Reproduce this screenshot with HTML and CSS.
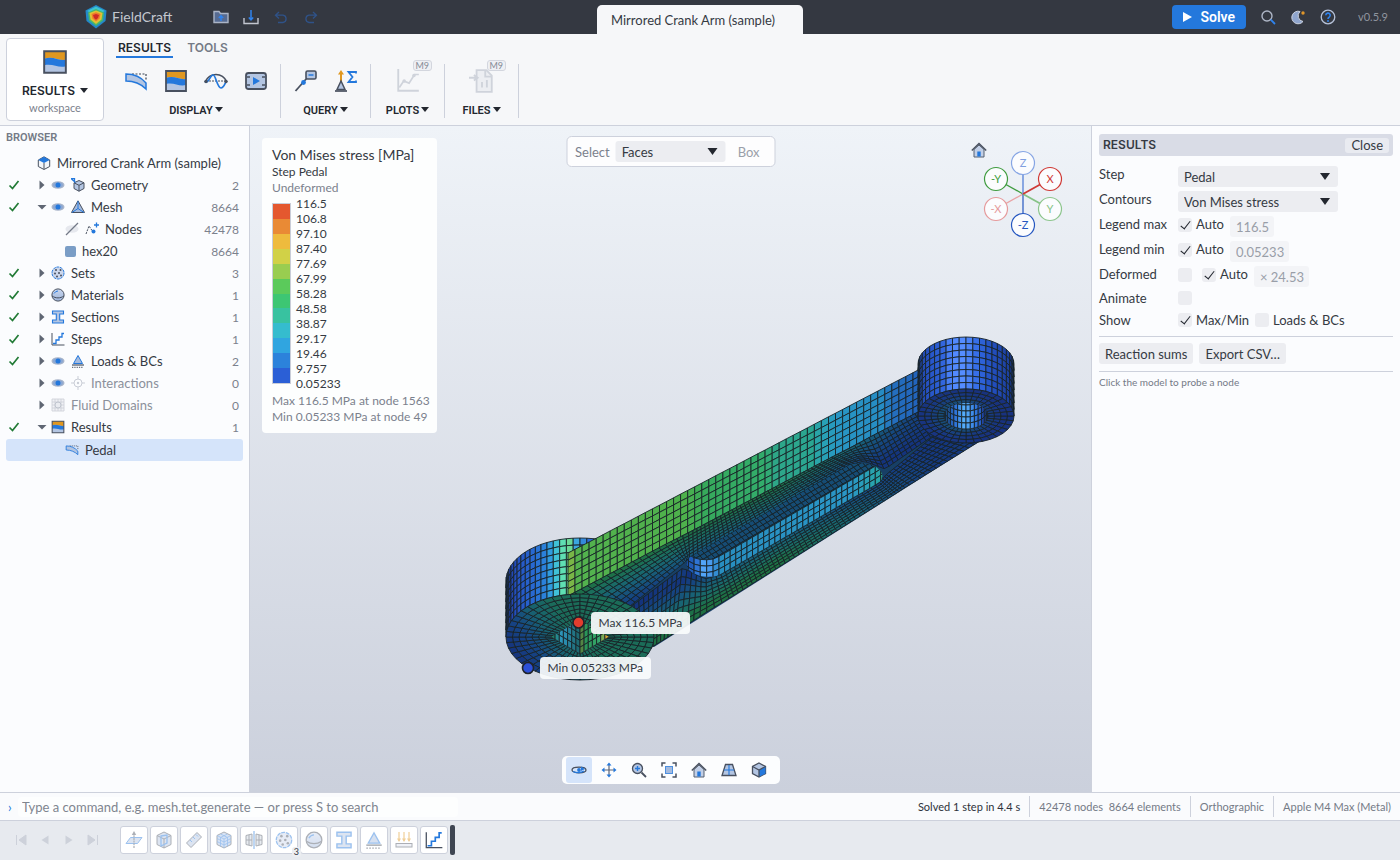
FILE: index.html
```html
<!DOCTYPE html>
<html lang="en">
<head>
<meta charset="utf-8">
<title>FieldCraft</title>
<link rel="stylesheet" href="styles.css">
</head>
<body>
<svg class="defs" aria-hidden="true">
  <defs>
    <linearGradient id="ball" x1="0" y1="0" x2="0" y2="1"><stop offset="0" stop-color="#c9d6ee"/><stop offset="1" stop-color="#9fb6dc"/></linearGradient>
  </defs>
  <symbol id="logo" viewBox="0 0 22 24"><path d="M11 0 21.500 5.500 20.500 16 11 23.500 1.500 16 .5 5.500Z" fill="#2389c9"/><path d="M11 1.500 20 6 11 10 2 6Z" fill="#3cc4d0"/><path d="M3 7.500 11 4l8 3.500-1 8L11 21l-7-5.500Z" fill="#49b86a"/><path d="M4.500 8 11 5.500 17.500 8l-1 6.500L11 19l-5.500-4.500Z" fill="#e2c033"/><path d="M6.500 9 11 7.300 15.500 9l-1 4.500L11 16.500l-3.500-3Z" fill="#ee7a2b"/><path d="M8 10l3-1 3 1-1 3-2 1.700-2-1.700Z" fill="#cf2a25"/></symbol>
  <symbol id="folder" viewBox="0 0 16 16"><path d="M1 2.500h5l1.500 2H15v9H1Z" fill="#566b92" stroke="#aab4c6" stroke-width="1.400"/><path d="M8 12V7M5.800 9 8 6.800 10.200 9" fill="none" stroke="#2f83ee" stroke-width="1.500"/></symbol>
  <symbol id="save" viewBox="0 0 16 16"><path d="M1 9v5.500h14V9" fill="none" stroke="#c2c6d0" stroke-width="1.400"/><path d="M8 1v9.500M5.800 8.500 8 10.800l2.200-2.300" fill="none" stroke="#2f83ee" stroke-width="1.500"/></symbol>
  <symbol id="undo" viewBox="0 0 16 16"><path d="M6 3 2.500 6.200 6 9.500M2.500 6.200H10a3.700 3.700 0 0 1 0 7.300H5" fill="none" stroke="#2f5288" stroke-width="1.300"/></symbol>
  <symbol id="redo" viewBox="0 0 16 16"><path d="M10 3l3.500 3.200L10 9.500M13.500 6.200H6a3.700 3.700 0 0 0 0 7.300h5" fill="none" stroke="#2f5288" stroke-width="1.300"/></symbol>
  <symbol id="search" viewBox="0 0 16 16"><circle cx="7" cy="7" r="5" fill="none" stroke="#aeb6c6" stroke-width="1.400"/><path d="M10.700 10.700 15 15" stroke="#2f83ee" stroke-width="1.800"/></symbol>
  <symbol id="moon" viewBox="0 0 16 16"><path d="M10 2.500A6.300 6.300 0 1 0 13 12.500 5.800 5.800 0 0 1 10 2.500Z" fill="#8fa5cd" stroke="#cdd3e0"/><circle cx="13" cy="4" r="1.700" fill="#e0962a"/></symbol>
  <symbol id="help" viewBox="0 0 16 16"><circle cx="8" cy="8" r="6.800" fill="none" stroke="#b5c1d8" stroke-width="1.300"/><path d="M5.800 6.300a2.200 2.200 0 1 1 3.300 1.900Q8 8.800 8 10" fill="none" stroke="#2f83ee" stroke-width="1.600"/><circle cx="8" cy="12" r="1" fill="#2f83ee"/></symbol>
  <symbol id="contour" viewBox="0 0 24 24"><path d="M2 2h20v20H2Z" fill="#b3c5e2"/><path d="M2 2h20v8c-7 1-12-4-20-1Z" fill="#e0971f"/><path d="M2 9c8-3 13 2 20 1v6c-7 2-12-3-20-1Z" fill="#2478dc"/><path d="M2 2h20v20H2Z" fill="none" stroke="#48505f" stroke-width="1.800"/></symbol>
  <symbol id="deform" viewBox="0 0 24 24"><path d="M8 5h14v6" fill="none" stroke="#3b4454" stroke-width="1.200" stroke-dasharray="2 1.500"/><path d="M2 5c8 0 15 3 20 9v6c-5-5-12-8-20-8Z" fill="#b3c5e2" stroke="#2478dc" stroke-width="1.500"/></symbol>
  <symbol id="wave" viewBox="0 0 24 24"><path d="M2 12h20" stroke="#48505f" stroke-dasharray="2 1"/><path d="M1 13C6 3 18 3 23 13" fill="none" stroke="#48505f" stroke-width="1.600"/><path d="M1 13c4 2 5-7 8-7s4 13 8 13c3 0 4-5 5-6" fill="none" stroke="#2478dc" stroke-width="1.700"/><circle cx="2" cy="12.500" r="1.700" fill="#48505f"/><circle cx="22" cy="12.500" r="1.700" fill="#48505f"/></symbol>
  <symbol id="film" viewBox="0 0 24 24"><rect x="2" y="4" width="20" height="16" rx="2.500" fill="#b3c5e2" stroke="#48505f" stroke-width="1.800"/><path d="M3 8h3M3 16h3M18 8h3M18 16h3" stroke="#48505f" stroke-width="1.500"/><path d="M9 8v8l7-4Z" fill="#2478dc"/></symbol>
  <symbol id="probe" viewBox="0 0 24 24"><path d="M1.500 22 13 9" stroke="#48505f" stroke-width="1.800"/><rect x="12" y="2" width="10" height="8" rx="1.500" fill="#b3c5e2" stroke="#48505f" stroke-width="1.600"/><path d="M14.500 6h5" stroke="#2478dc" stroke-width="1.500"/><circle cx="9.500" cy="13.500" r="2.400" fill="#2478dc"/></symbol>
  <symbol id="reaction" viewBox="0 0 24 24"><path d="M7 13V4" stroke="#e0971f" stroke-width="2"/><path d="M4 5.500 7 1l3 4.500Z" fill="#e0971f"/><path d="M3 20.500 7 12l4 8.500Z" fill="#b3c5e2" stroke="#48505f" stroke-width="1.500"/><path d="M1 22h12" stroke="#48505f" stroke-width="1.700"/><path d="M22 4.500V3h-7.500l4 5-4 5H22v-1.500" fill="none" stroke="#2478dc" stroke-width="1.800"/></symbol>
  <symbol id="plot" viewBox="0 0 24 24"><path d="M3 1v20h19" fill="none" stroke="#cfd3db" stroke-width="1.700"/><path d="m4 18 4-6 5 2 5-8h4" fill="none" stroke="#cfd3db" stroke-width="1.600"/><circle cx="8.500" cy="12" r="1.600" fill="#cfd3db"/><circle cx="17.500" cy="7" r="1.600" fill="#cfd3db"/></symbol>
  <symbol id="file" viewBox="0 0 24 24"><path d="M7 2h9l5 5v15H7Z" fill="#eceef2" stroke="#cfd3db" stroke-width="1.700"/><path d="M15 2v6h6M12 18v-5M16.500 18v-7" fill="none" stroke="#cfd3db" stroke-width="1.700"/><path d="M0 9h7M4.500 6.500 8 9l-3.500 2.500" fill="none" stroke="#cfd3db" stroke-width="1.700"/></symbol>
  <symbol id="check" viewBox="0 0 12 12"><path d="M1.500 6.500 4.500 9.500 10.500 2" fill="none" stroke="#217a35" stroke-width="1.700"/></symbol>
  <symbol id="right" viewBox="0 0 12 12"><path d="M3.500 1.500 8.500 6l-5 4.500Z" fill="#5f6673"/></symbol>
  <symbol id="down" viewBox="0 0 12 12"><path d="M1.500 4h9L6 8.500Z" fill="#5f6673"/></symbol>
  <symbol id="eye" viewBox="0 0 14 14"><ellipse cx="7" cy="7" rx="6.500" ry="3.800" fill="#a9b5ca"/><ellipse cx="7" cy="7" rx="5" ry="2.800" fill="#8ba8d4"/><circle cx="7" cy="7" r="2.500" fill="#2478dc"/></symbol>
  <symbol id="eyeoff" viewBox="0 0 14 14"><ellipse cx="7" cy="7" rx="6.500" ry="3.800" fill="#e6e8ee"/><path d="M1 13 13 1" stroke="#737987" stroke-width="1.200"/></symbol>
  <symbol id="cube" viewBox="0 0 14 14"><path d="M7 .8 12.700 4v6.500L7 13.500 1.300 10.500V4Z" fill="#f2f5fa" stroke="#48505f"/><path d="M7 .8 12.700 4 7 7 1.300 4Z" fill="#2478dc"/><path d="M7 7v6" stroke="#48505f"/></symbol>
  <symbol id="geom" viewBox="0 0 14 14"><path d="M8 2.500l5 2.300v5.700l-5 2.700-5-2.700V4.800Z" fill="#b3c5e2" stroke="#48505f"/><path d="m3 4.800 5 2.500 5-2.500M8 7.300v6" fill="none" stroke="#48505f"/><path d="M0 .5h3.500v3.200M.5 1l4 3.500" fill="none" stroke="#2478dc" stroke-width="1.300"/></symbol>
  <symbol id="mesh" viewBox="0 0 14 14"><path d="M7 .8 13.500 12.500H.5Z" fill="#a5bbde" stroke="#48505f"/><path d="M7 1v7.500M7 8.500l-6 4M7 8.500l6 4" stroke="#2478dc"/></symbol>
  <symbol id="nodes" viewBox="0 0 14 14"><path d="m1 12 3-8 4 6" fill="none" stroke="#48505f" stroke-dasharray="2 1"/><circle cx="8.500" cy="9.500" r="2" fill="#2478dc"/><path d="M11.500.5v5M9 3h5" stroke="#2478dc" stroke-width="1.300"/></symbol>
  <symbol id="sets" viewBox="0 0 14 14"><circle cx="7" cy="7" r="6" fill="#ccd7ec" stroke="#2478dc" stroke-dasharray="3 .7"/><g fill="#48505f"><circle cx="5" cy="4" r="1"/><circle cx="9.500" cy="4" r="1"/><circle cx="4" cy="7.500" r="1"/><circle cx="8" cy="7" r="1"/><circle cx="6" cy="10.500" r="1"/><circle cx="10" cy="9.500" r="1"/></g></symbol>
  <symbol id="ballicon" viewBox="0 0 14 14"><circle cx="7" cy="7" r="6.100" fill="url(#ball)" stroke="#48505f"/><path d="M1 8c4 2.500 8 2.500 12 0" fill="none" stroke="#48505f"/><path d="M3 5.500Q4.500 3 7 3" fill="none" stroke="#2478dc"/></symbol>
  <symbol id="ibeam" viewBox="0 0 14 14"><path d="M1.500 1h11v3H8.700v6h3.800v3h-11v-3h3.800V4H1.500Z" fill="#b3c5e2" stroke="#2478dc" stroke-width="1.100"/></symbol>
  <symbol id="steps" viewBox="0 0 14 14"><path d="M1 1v12h12.500" fill="none" stroke="#48505f"/><path d="M2 11.500h3V8h3V5h3V1.500h2" fill="none" stroke="#2478dc" stroke-width="1.300"/></symbol>
  <symbol id="loads" viewBox="0 0 14 14"><path d="M7 1.500 11.500 9.500h-9Z" fill="#a5bbde" stroke="#2478dc"/><path d="M1 11h12" stroke="#48505f" stroke-width="1.200"/><path d="M1 13.300h11" stroke="#48505f" stroke-dasharray="1.300 1"/></symbol>
  <symbol id="target" viewBox="0 0 14 14"><circle cx="7" cy="7" r="4" fill="none" stroke="#c9cdd6"/><circle cx="7" cy="7" r="1.200" fill="#c9cdd6"/><path d="M7 0v3M7 11v3M0 7h3M11 7h3" stroke="#c9cdd6"/></symbol>
  <symbol id="fluid" viewBox="0 0 14 14"><path d="M1 1h12v12H1ZM4 1v12M10 1v12M1 4h12M1 10h12M7 1v12M1 7h12" fill="#f0f1f5" stroke="#cfd2da" stroke-width=".9"/><circle cx="7" cy="7" r="3" fill="#e9ebf0" stroke="#bfc4ce"/></symbol>
  <symbol id="home" viewBox="0 0 16 16"><path d="M3 7.500V15h10V7.500L8 3Z" fill="#c2cfe6" stroke="#566070"/><path d="M.8 8.500 8 1.500l7.200 7" fill="none" stroke="#48505f" stroke-width="1.500"/><path d="M6.300 9.500h3.400v5H6.300Z" fill="#2478dc"/></symbol>
  <symbol id="orbit" viewBox="0 0 16 16"><ellipse cx="8" cy="8" rx="7" ry="2.800" fill="none" stroke="#48505f" stroke-width="1.300"/><path d="M2 9.500c3 1.500 8 1.600 11-.5" fill="none" stroke="#2478dc" stroke-width="1.300"/><circle cx="8" cy="8" r="1.900" fill="#2478dc"/><path d="M10 4.500l4 2.500-4 2Z" fill="#2478dc"/></symbol>
  <symbol id="pan" viewBox="0 0 16 16"><path d="M8 3v10M3 8h10" stroke="#5d6678" stroke-width="1.200"/><path d="M8 .5l2.500 3h-5ZM8 15.500l2.500-3h-5ZM.5 8l3-2.500v5ZM15.500 8l-3-2.500v5Z" fill="#2478dc"/></symbol>
  <symbol id="zoom" viewBox="0 0 16 16"><circle cx="6.500" cy="6.500" r="5" fill="#b3c5e2" stroke="#48505f" stroke-width="1.300"/><path d="M10.500 10.500 15 15" stroke="#48505f" stroke-width="1.800"/><path d="M6.500 4v5M4 6.500h5" stroke="#2478dc" stroke-width="1.400"/></symbol>
  <symbol id="fit" viewBox="0 0 16 16"><path d="M1 4.500V1h3.500M11.500 1H15v3.500M15 11.500V15h-3.500M4.500 15H1v-3.500" fill="none" stroke="#48505f" stroke-width="1.500"/><rect x="4.500" y="4.500" width="7" height="7" fill="#a5bbde" stroke="#4b8fe0"/></symbol>
  <symbol id="persp" viewBox="0 0 16 16"><path d="M4.500 2.500h7L15 13.500H1Z" fill="#b3c5e2" stroke="#48505f" stroke-width="1.300"/><path d="M8 3v10M3 8h10" stroke="#2478dc" stroke-width="1.100"/></symbol>
  <symbol id="box" viewBox="0 0 16 16"><path d="M8 1l6.500 3.500v7L8 15l-6.500-3.500v-7Z" fill="#b3c5e2" stroke="#48505f" stroke-width="1.300"/><path d="M8 8l6.500-3.500v7L8 15Z" fill="#2478dc"/><path d="M1.500 4.500 8 8l6.500-3.500M8 8v7" fill="none" stroke="#48505f" stroke-width="1.300"/></symbol>
  <symbol id="plane" viewBox="0 0 18 18"><path d="M5.500 6.500H17l-4.500 6H1Z" fill="#b3c5e2" stroke="#2478dc"/><path d="M9 17V3" stroke="#48505f" stroke-width="1.200" stroke-dasharray="2 .7"/><path d="M9 0l2.200 4H6.800Z" fill="#48505f"/></symbol>
  <symbol id="solid" viewBox="0 0 18 18"><path d="M9 1l7 3.500v9L9 17l-7-3.500v-9Z" fill="#b3c5e2" stroke="#48505f"/><path d="m2 4.500 7 3.500 7-3.500M9 8v9" fill="none" stroke="#48505f"/><path d="M6 5 12 4v8l-6 3Z" fill="none" stroke="#2478dc" stroke-width="1.300"/></symbol>
  <symbol id="ruler" viewBox="0 0 18 18"><path d="M1.500 12 12 1.500l4.500 4.500L6 16.500Z" fill="#b3c5e2" stroke="#48505f"/><path d="m5 9 2 2M8 6l2 2M11 3.500l2 2" stroke="#2478dc"/></symbol>
  <symbol id="grid3" viewBox="0 0 18 18"><path d="M9 1l7 3.500v9L9 17l-7-3.500v-9Z" fill="#a5bfe8" stroke="#48505f"/><path d="m2 4.500 7 3.500 7-3.500M9 8v9M2 7.500l7 3.500 7-3.500M2 10.500 9 14l7-3.500M5.500 3l7 3.500v9M12.500 3l-7 3.500v9" fill="none" stroke="#2478dc" stroke-width=".8"/></symbol>
  <symbol id="mirror" viewBox="0 0 18 18"><path d="M1 4.500 7 3v12l-6-1.500ZM17 4.500 11 3v12l6-1.500ZM4 4v10M1 9h6M14 4v10M11 9h6" fill="#ccd3e0" stroke="#48505f"/><path d="M9 0v18" stroke="#2478dc" stroke-width="1.300"/></symbol>
  <symbol id="force" viewBox="0 0 18 18"><path d="M4 1v9M9 1v9M14 1v9" stroke="#e0971f" stroke-width="1.200"/><path d="M2 7.500h4L4 11ZM7 7.500h4L9 11ZM12 7.500h4L14 11Z" fill="#e0971f"/><rect x="1" y="12.500" width="16" height="3.500" fill="#dce2ee" stroke="#48505f"/></symbol>
</svg>

<div class="app">
  <header class="topbar">
    <div class="brand">
      <svg class="logo"><use href="#logo"/></svg><span class="brand-name">FieldCraft</span>
      <nav class="quick" aria-label="File">
        <button class="ghost" aria-label="Open"><svg class="i16"><use href="#folder"/></svg></button>
        <button class="ghost" aria-label="Save"><svg class="i16"><use href="#save"/></svg></button>
        <button class="ghost" aria-label="Undo"><svg class="i16"><use href="#undo"/></svg></button>
        <button class="ghost" aria-label="Redo"><svg class="i16"><use href="#redo"/></svg></button>
      </nav>
    </div>
    <button class="doc-tab">Mirrored Crank Arm (sample)</button>
    <div class="top-right">
      <button class="solve"><span class="play"></span>Solve</button>
      <button class="ghost" aria-label="Search"><svg class="i16"><use href="#search"/></svg></button>
      <button class="ghost" aria-label="Theme"><svg class="i16"><use href="#moon"/></svg></button>
      <button class="ghost" aria-label="Help"><svg class="i16"><use href="#help"/></svg></button>
      <span class="version">v0.5.9</span>
    </div>
  </header>

  <section class="ribbon">
    <button class="workspace"><svg class="i26"><use href="#contour"/></svg><span class="ws-name">RESULTS <i class="tri"></i></span><span class="ws-sub">workspace</span></button>
    <div class="ribbon-body">
      <div class="tabs"><button class="tab tab-on">RESULTS</button><button class="tab">TOOLS</button></div>
      <div class="groups">
        <div class="group group-4"><div class="tools">
          <button class="ghost" aria-label="Deformed shape"><svg class="i24"><use href="#deform"/></svg></button>
          <button class="ghost" aria-label="Contours"><svg class="i24"><use href="#contour"/></svg></button>
          <button class="ghost" aria-label="Modes"><svg class="i24"><use href="#wave"/></svg></button>
          <button class="ghost" aria-label="Animate"><svg class="i24"><use href="#film"/></svg></button></div>
          <button class="group-name">DISPLAY<i class="tri"></i></button></div>
        <div class="group group-2"><div class="tools">
          <button class="ghost" aria-label="Probe"><svg class="i24"><use href="#probe"/></svg></button>
          <button class="ghost" aria-label="Reactions"><svg class="i24"><use href="#reaction"/></svg></button></div>
          <button class="group-name">QUERY<i class="tri"></i></button></div>
        <div class="group group-1"><div class="tools">
          <button class="ghost badged" aria-label="Plot"><svg class="i26"><use href="#plot"/></svg><span class="badge">M9</span></button></div>
          <button class="group-name">PLOTS<i class="tri"></i></button></div>
        <div class="group group-1"><div class="tools">
          <button class="ghost badged" aria-label="Export report"><svg class="i26"><use href="#file"/></svg><span class="badge">M9</span></button></div>
          <button class="group-name">FILES<i class="tri"></i></button></div>
      </div>
    </div>
  </section>

  <main class="main">
    <aside class="browser">
      <h2 class="browser-title">BROWSER</h2>
      <ul class="tree">
        <li class="row"><span class="lead lead-root"></span><svg class="i14"><use href="#cube"/></svg><span class="name">Mirrored Crank Arm (sample)</span></li>
        <li class="row"><span class="lead"><svg class="i12"><use href="#check"/></svg><svg class="i12"><use href="#right"/></svg></span><svg class="i14"><use href="#eye"/></svg><svg class="i14"><use href="#geom"/></svg><span class="name">Geometry</span><span class="count">2</span></li>
        <li class="row"><span class="lead"><svg class="i12"><use href="#check"/></svg><svg class="i12"><use href="#down"/></svg></span><svg class="i14"><use href="#eye"/></svg><svg class="i14"><use href="#mesh"/></svg><span class="name">Mesh</span><span class="count">8664</span></li>
        <li class="row"><span class="lead lead-child"></span><svg class="i14"><use href="#eyeoff"/></svg><svg class="i14"><use href="#nodes"/></svg><span class="name">Nodes</span><span class="count">42478</span></li>
        <li class="row"><span class="lead lead-child"></span><span class="swatch"></span><span class="name">hex20</span><span class="count">8664</span></li>
        <li class="row"><span class="lead"><svg class="i12"><use href="#check"/></svg><svg class="i12"><use href="#right"/></svg></span><svg class="i14"><use href="#sets"/></svg><span class="name">Sets</span><span class="count">3</span></li>
        <li class="row"><span class="lead"><svg class="i12"><use href="#check"/></svg><svg class="i12"><use href="#right"/></svg></span><svg class="i14"><use href="#ballicon"/></svg><span class="name">Materials</span><span class="count">1</span></li>
        <li class="row"><span class="lead"><svg class="i12"><use href="#check"/></svg><svg class="i12"><use href="#right"/></svg></span><svg class="i14"><use href="#ibeam"/></svg><span class="name">Sections</span><span class="count">1</span></li>
        <li class="row"><span class="lead"><svg class="i12"><use href="#check"/></svg><svg class="i12"><use href="#right"/></svg></span><svg class="i14"><use href="#steps"/></svg><span class="name">Steps</span><span class="count">1</span></li>
        <li class="row"><span class="lead"><svg class="i12"><use href="#check"/></svg><svg class="i12"><use href="#right"/></svg></span><svg class="i14"><use href="#eye"/></svg><svg class="i14"><use href="#loads"/></svg><span class="name">Loads &amp; BCs</span><span class="count">2</span></li>
        <li class="row row-dim"><span class="lead"><svg class="i12"><use href="#right"/></svg></span><svg class="i14"><use href="#eye"/></svg><svg class="i14"><use href="#target"/></svg><span class="name">Interactions</span><span class="count">0</span></li>
        <li class="row row-dim"><span class="lead"><svg class="i12"><use href="#right"/></svg></span><svg class="i14"><use href="#fluid"/></svg><span class="name">Fluid Domains</span><span class="count">0</span></li>
        <li class="row"><span class="lead"><svg class="i12"><use href="#check"/></svg><svg class="i12"><use href="#down"/></svg></span><svg class="i14"><use href="#contour"/></svg><span class="name">Results</span><span class="count">1</span></li>
        <li class="row row-on"><span class="lead lead-child"></span><svg class="i14"><use href="#deform"/></svg><span class="name">Pedal</span></li>
      </ul>
    </aside>

    <section class="viewport" aria-label="Model view">
      <svg class="model" id="model" viewBox="250 126 841 666"></svg>
      <div class="legend">
        <h3 class="legend-title">Von Mises stress [MPa]</h3>
        <p class="legend-line">Step Pedal</p>
        <p class="legend-line muted">Undeformed</p>
        <div class="scale">
          <div class="bar"><i class="c1"></i><i class="c2"></i><i class="c3"></i><i class="c4"></i><i class="c5"></i><i class="c6"></i><i class="c7"></i><i class="c8"></i><i class="c9"></i><i class="c10"></i><i class="c11"></i><i class="c12"></i></div>
          <ul class="ticks"><li>116.5</li><li>106.8</li><li>97.10</li><li>87.40</li><li>77.69</li><li>67.99</li><li>58.28</li><li>48.58</li><li>38.87</li><li>29.17</li><li>19.46</li><li>9.757</li><li>0.05233</li></ul>
        </div>
        <p class="legend-line muted">Max 116.5 MPa at node 1563</p>
        <p class="legend-line muted">Min 0.05233 MPa at node 49</p>
      </div>
      <div class="picker"><label class="muted" for="pick">Select</label><span class="drop drop-pick"><select id="pick"><option>Faces</option></select></span><button class="plain">Box</button></div>
      <span class="callout callout-max">Max 116.5 MPa</span>
      <span class="callout callout-min">Min 0.05233 MPa</span>
      <div class="gizmo">
        <button class="ghost gizmo-home" aria-label="Home view"><svg class="i16"><use href="#home"/></svg></button>
        <svg class="axes" viewBox="0 0 84 90">
          <path d="M42 45 15 30" stroke="#3f9c3f" stroke-width="1.300"/><path d="M42 45 15 60" stroke="#e9a3a5" stroke-width="1.300"/>
          <path d="M42 45V14" stroke="#7f9fe0" stroke-width="1.800"/><path d="M42 45v31" stroke="#2456c0" stroke-width="1.200"/>
          <path d="M42 45 69 60" stroke="#86c286" stroke-width="1.800"/><path d="M42 45 69 30" stroke="#cf3834" stroke-width="1.800"/>
          <g fill="#fbfcfe" stroke-width="1.200"><circle cx="42" cy="14" r="11.500" stroke="#86a5e4"/><circle cx="15" cy="30" r="11.500" stroke="#3f9c3f"/><circle cx="69" cy="30" r="11.500" stroke="#cf3834"/><circle cx="15" cy="60" r="11.500" stroke="#e59a9c"/><circle cx="69" cy="60" r="11.500" stroke="#8cc58c"/><circle cx="42" cy="76" r="11.500" stroke="#2456c0"/></g>
          <g class="axis-text"><text x="42" y="18" fill="#7f9fe0">Z</text><text x="15" y="34" fill="#3f9c3f">-Y</text><text x="69" y="34" fill="#cf3834">X</text><text x="15" y="64" fill="#e59a9c">-X</text><text x="69" y="64" fill="#86c286">Y</text><text x="42" y="80" fill="#2456c0">-Z</text></g>
        </svg>
      </div>
      <div class="viewbar">
        <button class="vb vb-on" aria-label="Orbit"><svg class="i16"><use href="#orbit"/></svg></button><button class="vb" aria-label="Pan"><svg class="i16"><use href="#pan"/></svg></button><button class="vb" aria-label="Zoom"><svg class="i16"><use href="#zoom"/></svg></button><button class="vb" aria-label="Fit"><svg class="i16"><use href="#fit"/></svg></button><button class="vb" aria-label="Home"><svg class="i16"><use href="#home"/></svg></button><button class="vb" aria-label="Projection"><svg class="i16"><use href="#persp"/></svg></button><button class="vb" aria-label="Shading"><svg class="i16"><use href="#box"/></svg></button>
      </div>
    </section>

    <aside class="panel">
      <header class="panel-head"><h2 class="panel-title">RESULTS</h2><button class="btn close">Close</button></header>
      <div class="form">
        <label class="key" for="step">Step</label><span class="drop"><select id="step"><option>Pedal</option></select></span>
        <label class="key" for="cont">Contours</label><span class="drop"><select id="cont"><option>Von Mises stress</option></select></span>
        <label class="key" for="lmax">Legend max</label><div class="val"><label class="tick"><input type="checkbox" checked>Auto</label><input class="num num-s" id="lmax" value="116.5" disabled></div>
        <label class="key" for="lmin">Legend min</label><div class="val"><label class="tick"><input type="checkbox" checked>Auto</label><input class="num num-l" id="lmin" value="0.05233" disabled></div>
        <label class="key" for="deformed">Deformed</label><div class="val val-wide"><input type="checkbox" id="deformed"><label class="tick"><input type="checkbox" checked>Auto</label><input class="num num-m" aria-label="Scale" value="× 24.53" disabled></div>
        <label class="key key-s" for="anim">Animate</label><div class="val val-s"><input type="checkbox" id="anim"></div>
        <span class="key key-s">Show</span><div class="val val-s"><label class="tick"><input type="checkbox" checked>Max/Min</label><label class="tick"><input type="checkbox">Loads &amp; BCs</label></div>
      </div>
      <div class="actions"><button class="btn">Reaction sums</button><button class="btn">Export CSV…</button></div>
      <p class="hint">Click the model to probe a node</p>
    </aside>
  </main>

  <div class="command">
    <label class="prompt" for="cmd">›</label><input class="cmd" id="cmd" placeholder="Type a command, e.g. mesh.tet.generate — or press S to search">
    <div class="status"><span class="stat stat-strong">Solved 1 step in 4.4 s</span><span class="stat">42478 nodes&nbsp; 8664 elements</span><span class="stat">Orthographic</span><span class="stat">Apple M4 Max (Metal)</span></div>
  </div>

  <footer class="timeline">
    <div class="transport">
      <button class="ghost" aria-label="First"><svg class="i12"><path d="M1.500 1v10M11 1v10L4 6Z" fill="#cdd1da" stroke="#cdd1da"/></svg></button>
      <button class="ghost" aria-label="Back"><svg class="i12"><path d="M9.500 1.500v9L2.500 6Z" fill="#cdd1da"/></svg></button>
      <button class="ghost" aria-label="Play"><svg class="i12"><path d="M2.500 1.500v9L9.500 6Z" fill="#cdd1da"/></svg></button>
      <button class="ghost" aria-label="Last"><svg class="i12"><path d="M10.500 1v10M1 1v10l7-5Z" fill="#cdd1da" stroke="#cdd1da"/></svg></button>
    </div>
    <div class="history">
      <button class="op" aria-label="Plane"><svg class="i18"><use href="#plane"/></svg></button><button class="op" aria-label="Part"><svg class="i18"><use href="#solid"/></svg></button><button class="op" aria-label="Size"><svg class="i18"><use href="#ruler"/></svg></button><button class="op" aria-label="Mesh"><svg class="i18"><use href="#grid3"/></svg></button><button class="op" aria-label="Mirror"><svg class="i18"><use href="#mirror"/></svg></button><button class="op badged" aria-label="Sets"><svg class="i18"><use href="#sets"/></svg><span class="op-count">3</span></button><button class="op" aria-label="Material"><svg class="i18"><use href="#ballicon"/></svg></button><button class="op" aria-label="Section"><svg class="i18"><use href="#ibeam"/></svg></button><button class="op" aria-label="Support"><svg class="i18"><use href="#loads"/></svg></button><button class="op" aria-label="Load"><svg class="i18"><use href="#force"/></svg></button><button class="op op-now" aria-label="Step"><svg class="i18"><use href="#steps"/></svg></button><span class="marker"></span>
    </div>
  </footer>
</div>
<script src="model.js"></script>
</body>
</html>
```
FILE: styles.css
```css
* { box-sizing: border-box; }
body { margin: 0; font-family: Lato, "Noto Sans", sans-serif; font-size: 13px; line-height: 16px; color: #353a43; }
h2, h3, p, ul { margin: 0; padding: 0; font-weight: 400; }
ul { list-style: none; }
button, input, select { font: inherit; color: inherit; margin: 0; border: 0; }
button { background: none; padding: 0; cursor: pointer; }
svg { display: block; flex: none; }
.defs { position: absolute; width: 0; height: 0; }
.i12 { width: 12px; height: 12px; }
.i14 { width: 14px; height: 14px; }
.i16 { width: 16px; height: 16px; }
.i18 { width: 18px; height: 18px; }
.i24 { width: 24px; height: 24px; }
.i26 { width: 26px; height: 26px; }
.muted { color: #7b818d; }
.app { display: flex; flex-direction: column; min-height: 100vh; background: #f6f7f9; }

.topbar { display: grid; grid-template-columns: 1fr auto 1fr; height: 34px; background: #343841; }
.brand { display: flex; align-items: center; padding-left: 85px; }
.logo { width: 22px; height: 24px; }
.brand-name { margin-left: 5px; width: 101px; font-size: 14px; color: #c3c7cf; }
.quick { display: flex; gap: 14px; }
.doc-tab { align-self: end; height: 29px; padding: 0 14px; min-width: 206px; text-align: left; border-radius: 5px 5px 0 0; background: #f6f7f9; }
.top-right { display: flex; align-items: center; justify-content: flex-end; gap: 14px; padding-right: 12px; }
.solve { display: flex; align-items: center; gap: 8px; height: 24px; padding: 0 11px; border-radius: 4px; background: #2478dc; color: #fff; font: 600 14px/24px Roboto, sans-serif; }
.play { border: 5px solid transparent; border-left: 9px solid #fff; border-right: 0; }
.version { margin-left: 8px; font-size: 11px; color: #8f949e; }

.ribbon { display: flex; height: 92px; gap: 12px; padding: 4px 6px; border-bottom: 1px solid #cdd1dc; }
.workspace { display: flex; flex-direction: column; align-items: center; width: 98px; height: 83px; padding-top: 10px; border: 1px solid #cdd1dc; border-radius: 4px; background: #fff; }
.ws-name { margin-top: 7px; font: 600 12px/18px Inter, sans-serif; color: #23272f; }
.ws-sub { font-size: 11px; color: #7b818d; }
.tri { display: inline-block; margin-left: 2px; border: 4px solid transparent; border-top: 5px solid #23272f; border-bottom: 0; vertical-align: 2px; }
.tabs { display: flex; gap: 12px; height: 20px; }
.tab { padding: 1px 2px 0; border-bottom: 2px solid transparent; font: 600 12px/17px Inter, sans-serif; color: #747a86; }
.tab-on { border-color: #2478dc; color: #23272f; }
.groups { display: flex; margin-top: 6px; }
.group { display: flex; flex-direction: column; justify-content: space-between; height: 54px; border-right: 1px solid #cdd1dc; }
.tools { display: flex; justify-content: center; gap: 16px; height: 34px; align-items: center; }
.group-4 { padding-right: 4px; width: 165px; }
.group-2 { width: 90px; }
.group-1 { width: 74px; }
.group-name { font: 600 11px/14px Roboto, sans-serif; color: #23272f; }
.badged { position: relative; }
.badge { position: absolute; left: 18px; top: -8px; padding: 0 2px; border: 1px solid #d3d6de; border-radius: 3px; background: #eef0f4; font-size: 9px; line-height: 9px; color: #858b96; }

.main { flex: 1; display: grid; grid-template-columns: 250px 1fr 309px; }
.browser { padding: 4px 6px; background: #fbfcfe; border-right: 1px solid #cdd1dc; }
.browser-title { font: 600 11px/16px Roboto, sans-serif; color: #747a86; margin-bottom: 6px; }
.row { display: flex; align-items: center; gap: 6px; height: 22px; padding-right: 4px; border-radius: 3px; }
.row:last-child { margin-top: 1px; }
.lead { display: flex; justify-content: space-between; width: 42px; margin-right: -3px; padding-left: 2px; }
.row-dim .lead { justify-content: flex-end; }
.lead-root { width: 28px; }
.lead-child { width: 56px; }
.row-on { background: #d5e4fa; }
.row-dim .name { color: #8b909b; }
.count { margin-left: auto; padding-top: 1px; font-size: 12px; color: #7b818d; }
.swatch { width: 11px; height: 11px; border-radius: 2px; background: #7a9dc6; }

.viewport { position: relative; overflow: hidden; background: linear-gradient(#eff3f8, #cbd0dc); }
.model { position: absolute; inset: 0; width: 100%; height: 100%; }
.legend { position: absolute; left: 12px; top: 12px; width: 175px; padding: 8px 10px; border-radius: 4px; background: #fdfefe; white-space: nowrap; }
.legend-title { font-size: 14px; line-height: 18px; }
.legend-line { font-size: 12px; line-height: 16px; }
.scale { display: flex; gap: 5px; margin-bottom: 2px; }
.bar { display: flex; flex-direction: column; width: 19px; margin: 7px 0; border: 1px solid #c9cdd8; }
.bar i { flex: 1; }
.c1 { background: #e4582f; } .c2 { background: #e98a35; } .c3 { background: #eebb3d; } .c4 { background: #d1d147; }
.c5 { background: #99cd50; } .c6 { background: #5bca5b; } .c7 { background: #3dc673; } .c8 { background: #38c2a0; }
.c9 { background: #35bcce; } .c10 { background: #30a5e0; } .c11 { background: #2c82db; } .c12 { background: #2b5fd6; }
.ticks { font-size: 12px; line-height: 15px; }
.picker { position: absolute; left: 50%; top: 10px; transform: translateX(-50%); display: flex; align-items: center; gap: 6px; height: 31px; width: 209px; padding: 0 8px; border: 1px solid #cdd1dc; border-radius: 5px; background: #fdfdfe; }
.plain { margin-left: 6px; color: #9a9fa9; }
.drop { position: relative; display: block; width: 160px; }
.drop select { appearance: none; width: 100%; height: 21px; padding: 0 6px; border-radius: 3px; background: #ecedf1; }
.drop::after { content: ""; position: absolute; right: 8px; top: 7px; border: 5px solid transparent; border-top: 7px solid #23272f; border-bottom: 0; pointer-events: none; }
.drop-pick { width: 110px; }
.callout { position: absolute; padding: 0 8px; border-radius: 4px; background: rgb(250 252 253 / 93%); font-size: 12px; line-height: 22px; white-space: nowrap; }
.callout-max { left: calc(50% - 80px); top: calc(50% + 153px); }
.callout-min { left: calc(50% - 131px); top: calc(50% + 198px); }
.gizmo { position: absolute; right: 26px; top: 16px; }
.gizmo-home { position: absolute; left: -10px; top: 0; }
.axes { width: 84px; height: 90px; margin-top: 7px; }
.axis-text { font-size: 11px; text-anchor: middle; }
.viewbar { position: absolute; left: 50%; bottom: 8px; transform: translateX(-50%); display: flex; gap: 4px; padding: 1px 8px 1px 4px; border-radius: 5px; background: #fcfdfe; }
.vb { display: flex; align-items: center; justify-content: center; width: 26px; height: 26px; border-radius: 3px; }
.vb-on { background: #d5e4fa; }

.panel { padding: 8px 7px; background: #fbfcfe; border-left: 1px solid #cdd1dc; }
.panel-head { display: flex; align-items: center; justify-content: space-between; height: 22px; padding: 0 4px; border-radius: 3px; background: #d9dce6; }
.panel-title { font: 600 12px/16px Inter, sans-serif; }
.btn { height: 21px; padding: 0 6px; border-radius: 3px; background: #ecedf1; }
.close { height: 15px; line-height: 15px; background: #e9ebf1; }
.form { display: grid; grid-template-columns: 79px 1fr; row-gap: 4px; margin-top: 10px; padding-bottom: 5px; border-bottom: 1px solid #cdd1dc; }
.key { line-height: 17px; height: 21px; }
.val { display: flex; gap: 6px; height: 21px; }
.val-wide { gap: 10px; }
.val-wide .num { margin-left: -4px; }
.key-s, .val-s { height: 18px; line-height: 15px; }
.tick { display: flex; gap: 4px; line-height: 17px; }
input[type=checkbox] { appearance: none; width: 14px; height: 14px; margin-top: 2px; border-radius: 3px; background: #ecedf1; }
input[type=checkbox]:checked::after { content: ""; display: block; width: 4px; height: 9px; margin: 1px 0 0 5px; border: solid #23272f; border-width: 0 1px 1px 0; transform: rotate(38deg); }
.val-s .tick { line-height: 15px; }
.val-s input[type=checkbox] { margin-top: 0; }
.num { height: 21px; padding: 0 0 0 6px; border-radius: 3px; background: #f3f4f7; color: #999ea8; }
.num-s { width: 44px; } .num-m { width: 55px; } .num-l { width: 59px; }
.actions { display: flex; gap: 6px; padding: 6px 0 7px; border-bottom: 1px solid #cdd1dc; }
.hint { margin-top: 2px; font-size: 10px; color: #747a86; }

.command { display: flex; align-items: center; height: 29px; padding: 0 8px; border: solid #cdd1dc; border-width: 1px 0; background: #fafbfd; }
.prompt { width: 10px; color: #2478dc; }
.cmd { width: 440px; height: 20px; padding: 0 4px; border-radius: 4px; background: #fdfefe; }
.cmd::placeholder { color: #7f858f; }
.status { display: flex; margin-left: auto; }
.stat { padding: 0 9px; border-left: 1px solid #cdd1dc; font-size: 11px; line-height: 21px; color: #747a86; }
.stat:last-child { padding-right: 1px; }
.stat-strong { border: 0; color: #2d323b; }

.timeline { display: flex; align-items: center; height: 39px; padding: 0 15px 1px; background: #e7eaef; }
.transport { display: flex; gap: 12px; width: 105px; }
.history { display: flex; align-items: center; gap: 2px; }
.op { display: flex; align-items: center; justify-content: center; width: 28px; height: 28px; border: 1px solid #cdd1dc; border-radius: 3px; background: #fff; }
.op svg { opacity: .45; }
.op-now svg { opacity: 1; }
.op-count { position: absolute; right: -4px; bottom: -4px; padding: 0 2px; border-radius: 3px; background: #eceef2; font-size: 9px; line-height: 10px; }
.marker { width: 5px; height: 30px; border-radius: 2px; background: #3f4652; }
```
FILE: model.js
```js
const svg = document.getElementById("model");
const NS = "http://www.w3.org/2000/svg";
const mix = (a, b, t) => a + (b - a) * t;
const lerp = (p, q, t) => [mix(p[0], q[0], t), mix(p[1], q[1], t)];

// Piecewise-linear colour ramp: stops are [position, [r, g, b]].
function ramp(stops, t) {
  if (t <= stops[0][0]) return stops[0][1];
  for (let i = 1; i < stops.length; i++) {
    if (t <= stops[i][0]) {
      const k = (t - stops[i - 1][0]) / (stops[i][0] - stops[i - 1][0]);
      return stops[i - 1][1].map((c, n) => mix(c, stops[i][1][n], k));
    }
  }
  return stops[stops.length - 1][1];
}
const rgb = c => "rgb(" + c.map(Math.round).join(",") + ")";

function node(parent, name, attrs) {
  const e = document.createElementNS(NS, name);
  for (const k in attrs) e.setAttribute(k, attrs[k]);
  parent.appendChild(e);
  return e;
}

// Grid of quads ruled between curve a(t) and curve b(t).
function patch(parent, a, b, n, m, color) {
  const g = node(parent, "g", { stroke: "#192428", "stroke-width": 0.9, "stroke-linejoin": "round" });
  for (let i = 0; i < n; i++) {
    for (let j = 0; j < m; j++) {
      const q = [[i, j], [i + 1, j], [i + 1, j + 1], [i, j + 1]].map(([u, v]) => lerp(a(u / n), b(u / n), v / m));
      const c = [(q[0][0] + q[2][0]) / 2, (q[0][1] + q[2][1]) / 2];
      node(g, "polygon", { points: q.map(p => p.map(x => x.toFixed(1)).join()).join(" "), fill: rgb(color(c[0], c[1], (i + .5) / n, (j + .5) / m)) });
    }
  }
}
const arc = (cx, cy, a, b, t0, t1) => t => {
  const w = mix(t0, t1, t) * Math.PI / 180;
  return [cx + a * Math.cos(w), cy + b * Math.sin(w)];
};
const up = (f, h) => t => { const p = f(t); return [p[0], p[1] - h]; };
const poly = pts => {
  const len = [0];
  for (let i = 1; i < pts.length; i++) len.push(len[i - 1] + Math.hypot(pts[i][0] - pts[i - 1][0], pts[i][1] - pts[i - 1][1]));
  return t => {
    const d = t * len[len.length - 1];
    let i = 1;
    while (i < pts.length - 1 && len[i] < d) i++;
    return lerp(pts[i - 1], pts[i], (d - len[i - 1]) / (len[i] - len[i - 1]));
  };
};
// One parameter step per listed point, so matching points of two curves face each other.
const spans = (pts, at) => t => {
  let i = 1;
  while (i < pts.length - 1 && at[i] < t) i++;
  return lerp(pts[i - 1], pts[i], (t - at[i - 1]) / (at[i] - at[i - 1]));
};
function clip(id, d) {
  const c = node(svg, "clipPath", { id });
  node(c, "path", { d });
  return node(svg, "g", { "clip-path": `url(#${id})` });
}

// Left boss, outer wall.
const leftWall = [[506, [30, 56, 150]], [514, [36, 76, 190]], [535, [40, 108, 212]], [547, [44, 136, 220]], [554, [52, 180, 226]], [562, [90, 222, 190]], [568, [120, 230, 130]], [576, [60, 170, 225]], [590, [44, 110, 215]], [610, [34, 84, 190]], [654, [20, 44, 120]]];
patch(svg, up(arc(580, 637, 74, 43, 180, 360), 56), arc(580, 637, 74, 43, 180, 360), 34, 8, x => ramp(leftWall, x));

// Long side of the arm.
const side = [[568, [150, 185, 66]], [576, [84, 178, 78]], [685, [78, 177, 76]], [706, [54, 170, 92]], [765, [50, 172, 108]], [776, [46, 166, 136]], [812, [42, 166, 146]], [820, [40, 165, 176]], [838, [40, 150, 196]], [882, [38, 140, 196]], [892, [36, 112, 190]], [917, [34, 100, 188]]];
patch(svg, poly([[568, 553], [920, 369]]), poly([[568, 596], [920, 411]]), 50, 6, x => ramp(side, x));

// Bottom face, coloured by distance from the neutral axis.
node(svg, "path", { d: "M568 596 920 411 980 441 654 647Z", fill: "#173f66" });
const face = [[0, [20, 50, 125]], [.25, [22, 70, 128]], [.55, [24, 98, 118]], [.8, [27, 110, 96]], [1, [30, 112, 66]]];
function faceColor(x, y) {
  const axis = 637 - (x - 580) * .5725;
  const s = Math.min(1, Math.abs(y - axis) / mix(46, 30, (x - 600) / 320));
  return ramp(face, s * Math.min(1, Math.max(.08, (950 - x) / 170)));
}
const at = [0, .2, .26, .74, .79, .84, 1];
patch(svg,
  spans([[568, 596], [664, 545], [690, 532], [830, 458], [852, 447], [870, 437], [924, 409]], at),
  spans([[610, 622], [684, 563], [690, 557], [849, 465], [864, 461], [885, 469], [940, 431]], at), 74, 8, faceColor);
patch(svg,
  spans([[610, 622], [683, 568], [705, 579], [720, 575], [879, 483], [887, 474], [940, 431]], [0, .2, .26, .3, .76, .82, 1]),
  spans([[620, 667], [676, 632], [705, 613], [728, 599], [892, 496], [906, 487], [980, 441]], [0, .2, .26, .3, .76, .82, 1]), 76, 8, faceColor);

// Pocket: floor, then the wall that rises from its lower rim.
const pocket = clip("pocket", "M690 557A22 13 0 0 0 720 575L879 483A22 13 0 0 0 849 465Z");
patch(pocket, poly([[665, 560], [870, 442]]), poly([[690, 588], [895, 470]]), 48, 8, () => [22, 76, 116]);
const rim = poly([[683, 563], [684, 570], [690, 575], [697, 578], [705, 579], [713, 578], [720, 575], [879, 483], [885, 478], [887, 471]]);
const pocketWall = [[683, [25, 70, 150]], [695, [35, 100, 200]], [705, [90, 175, 255]], [713, [62, 140, 225]], [720, [40, 142, 192]], [850, [42, 150, 198]], [878, [40, 165, 170]], [888, [54, 165, 110]]];
patch(pocket, up(rim, 19), rim, 38, 3, x => ramp(pocketWall, x));

// Left boss, bottom ring and square socket.
const square = poly([[609, 637], [580, 654], [551, 637], [580, 620], [609, 637]]);
patch(svg, square, arc(580, 637, 74, 43, 0, 360), 48, 7, (x, y) => {
  const w = Math.atan2((y - 637) * 1.72, x - 580);
  const d = Math.hypot(x - 580, (y - 637) * 1.72) / 74;
  const blue = Math.max(0, Math.cos(w - 2.75)) * d;
  return ramp([[0, [27, 108, 88]], [.35, [24, 98, 112]], [.65, [22, 70, 132]], [1, [22, 50, 125]]], blue);
});
const socket = clip("socket", "M609 637 580 654 551 637 580 620Z");
patch(socket, poly([[551, 603], [580, 620]]), poly([[551, 637], [580, 654]]), 7, 5, x => ramp([[551, [27, 120, 80]], [562, [45, 150, 190]], [580, [28, 100, 105]]], x));
patch(socket, poly([[580, 620], [609, 603]]), poly([[580, 654], [609, 637]]), 7, 5, x => ramp([[580, [130, 120, 50]], [584, [40, 145, 85]], [600, [55, 170, 110]], [607, [220, 170, 50]]], x));

// Right boss.
const rightWall = [[918, [30, 66, 160]], [928, [38, 82, 196]], [942, [46, 98, 218]], [952, [80, 136, 255]], [966, [86, 142, 255]], [977, [52, 108, 230]], [990, [36, 82, 196]], [1008, [28, 64, 160]], [1014, [22, 48, 120]]];
patch(svg, up(arc(966, 416, 48, 27, 180, 360), 52), arc(966, 416, 48, 27, 180, 360), 22, 8, x => ramp(rightWall, x));
patch(svg, arc(966, 416, 22, 13, 0, 360), arc(966, 416, 48, 27, 0, 360), 36, 4, (x, y, u, v) => ramp([[0, [24, 82, 118]], [.5, [24, 58, 130]], [1, [24, 50, 128]]], v + Math.max(0, (x - 960) / 90)));
const bore = clip("bore", "M944 416A22 13 0 0 0 988 416A22 13 0 0 0 944 416Z");
const boreRim = arc(966, 416, 22, 13, 180, 0);
patch(bore, up(boreRim, 30), boreRim, 16, 5, x => ramp([[944, [24, 72, 130]], [955, [44, 112, 214]], [965, [90, 180, 255]], [976, [50, 120, 225]], [984, [30, 66, 170]], [988, [26, 60, 110]]], x));

// Extreme-value markers.
node(svg, "circle", { cx: 578.5, cy: 622.5, r: 5.5, fill: "#e23d2e", stroke: "#20242b", "stroke-width": 1.6 });
node(svg, "circle", { cx: 528, cy: 668, r: 5.5, fill: "#2c50d8", stroke: "#20242b", "stroke-width": 1.6 });
```
